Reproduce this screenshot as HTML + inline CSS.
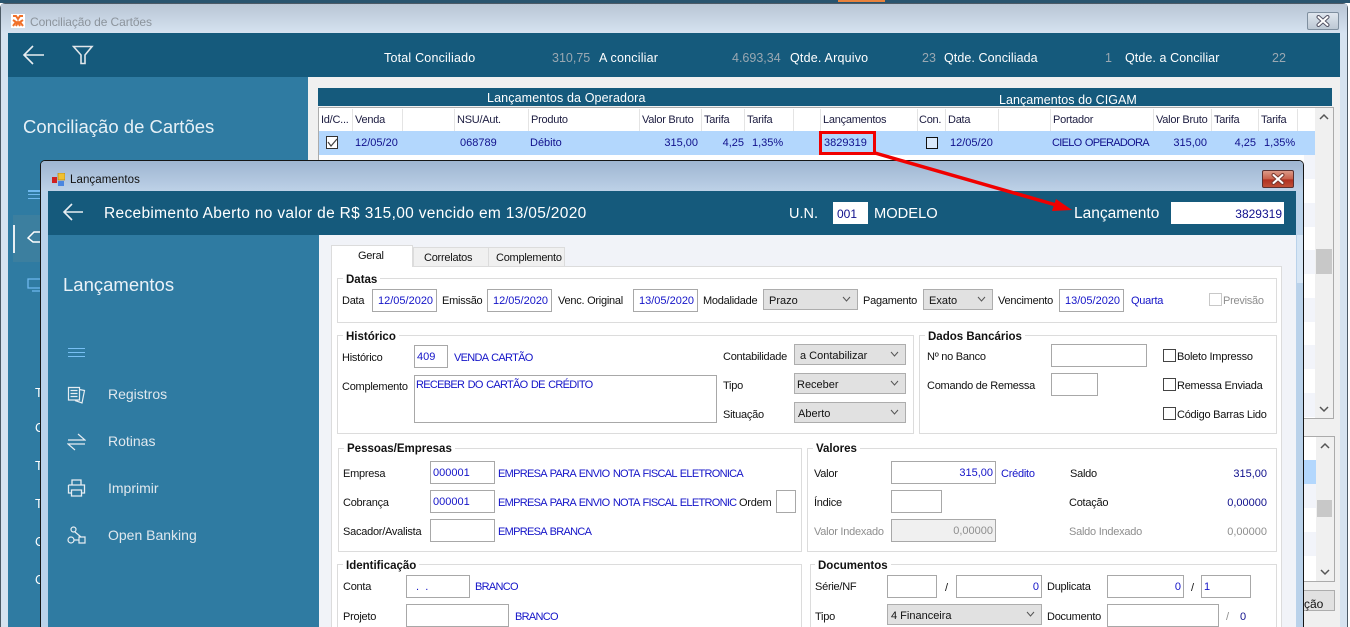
<!DOCTYPE html>
<html><head><meta charset="utf-8"><style>
html,body{margin:0;padding:0;width:1350px;height:627px;overflow:hidden;background:#fff}
body{position:relative;font-family:"Liberation Sans",sans-serif;font-size:11px;color:#111}
div,span{position:absolute;box-sizing:border-box}
.t{white-space:nowrap;line-height:14px;height:14px;margin-top:1px;letter-spacing:-.25px}
.z{margin-top:0;letter-spacing:.2px;font-size:12.5px;top:51px}
.q{letter-spacing:.08px}
.u{letter-spacing:-.7px;word-spacing:1px}
.b{color:#1414c8}
.n{color:#10108c}
.r{text-align:right}
.w{color:#fff}
.g{color:#8e8e8e}
.v{color:#9aa8b2;letter-spacing:0}
.i{background:#fff;border:1px solid #a8a8a8;height:23px;white-space:nowrap;line-height:23px;padding:0 2px;color:#1414c8}
.d{padding-left:5px}
.s{background:#e1e1e1;border:1px solid #adadad;height:21px;line-height:22px;padding-left:5px;white-space:nowrap}
.s svg{position:absolute;right:6px;top:6px}
.gb{border:1px solid #dcdcdc}
.gt{font-weight:bold;background:#fff;padding:0 3px;line-height:13px;height:13px;margin-top:1px;white-space:nowrap;font-size:11.5px}
.c{width:13px;height:13px;border:1px solid #444;background:#fff}
.h{color:#1c1c40}
.sep{width:1px;height:22px;top:109px;background:#e4e4e4}
.m{font-size:14px;color:#e0e8ee;line-height:18px;height:18px;white-space:nowrap}
.big{letter-spacing:0;font-size:14.5px;line-height:16px;height:16px}
</style></head><body>

<div style="left:0;top:0;width:1350px;height:3px;background:#29546e"></div>
<div style="left:838px;top:0;width:47px;height:2px;background:#e8823c"></div>
<div style="left:0;top:3px;width:1348px;height:624px;background:#d6e3f0;border:1px solid #4c5a66;border-bottom:0;border-radius:5px 5px 0 0"></div>
<div style="top:4px;left:1px;width:1346px;height:29px;background:linear-gradient(#b9c6d5,#d5e2f0)"></div>
<div style="left:11px;top:14px;width:14px;height:14px;background:#fff"></div>
<svg style="position:absolute;left:12px;top:15px" width="12" height="12"><rect width="12" height="12" fill="#fff"/><path d="M1 1h3l2 3 2-3h3M1 5l3 2-3 4M11 5l-3 2 3 4M4 11l2-4 2 4" stroke="#f0702a" stroke-width="2" fill="none"/></svg>
<div class="t" style="left:30px;top:15px;margin-top:0;letter-spacing:-.1px;font-size:12px;color:#8c949c">Conciliação de Cartões</div>
<div style="left:1307px;top:12px;width:32px;height:18px;border:1px solid #7f8f9f;border-radius:2px;background:linear-gradient(#dfe6ee,#bcc8d4)"></div>
<svg style="position:absolute;left:1316px;top:15px" width="14" height="12" fill="none" stroke-linecap="round"><path d="M2.500 2L11.500 10M11.500 2L2.500 10" stroke="#556" stroke-width="4"/><path d="M2.500 2L11.500 10M11.500 2L2.500 10" stroke="#fff" stroke-width="2"/></svg>

<div style="left:8px;top:33px;width:1332px;height:44px;background:#155a7c"></div>
<svg style="position:absolute;left:22px;top:45px" width="24" height="22" fill="none" stroke="#e8eef2" stroke-width="1.600"><path d="M2 10H22M11 1L2 10l9 9"/></svg>
<svg style="position:absolute;left:72px;top:45px" width="22" height="22" fill="none" stroke="#e0e6ea" stroke-width="1.600"><path d="M1.500 1.500H20L13 10V18.500H9V10Z"/></svg>
<div class="t z w" style="left:384px">Total Conciliado</div>
<div class="t z v" style="left:552px">310,75</div>
<div class="t z w" style="left:599px">A conciliar</div>
<div class="t z v" style="left:732px">4.693,34</div>
<div class="t z w" style="left:790px">Qtde. Arquivo</div>
<div class="t z v" style="left:922px">23</div>
<div class="t z w q" style="left:944px">Qtde. Conciliada</div>
<div class="t z v" style="left:1105px">1</div>
<div class="t z w q" style="left:1125px">Qtde. a Conciliar</div>
<div class="t z v" style="left:1272px">22</div>

<div style="left:8px;top:77px;width:300px;height:550px;background:#2f7ba2"></div>
<div style="left:308px;top:77px;width:1032px;height:550px;background:#f0f0f0"></div>
<div class="t" style="left:23px;top:116px;margin-top:0;letter-spacing:0;font-size:18.500px;line-height:22px;height:22px;color:#e6f0f6">Conciliação de Cartões</div>
<div style="left:28px;top:190px;width:12px;height:2px;background:#6eb8ee"></div>
<div style="left:28px;top:194px;width:12px;height:1px;background:#6eb8ee"></div>
<div style="left:28px;top:198px;width:12px;height:1px;background:#6eb8ee"></div>
<div style="left:13px;top:215px;width:27px;height:47px;background:#3c7f9f"></div>
<div style="left:13px;top:225px;width:2px;height:28px;background:#e8eef2"></div>
<svg style="position:absolute;left:27px;top:230px" width="14" height="16" fill="none" stroke="#fff" stroke-width="1.500"><path d="M1 8L7 2h7v10H6Z"/></svg>
<svg style="position:absolute;left:27px;top:277px" width="14" height="16" fill="none" stroke="#6eb8ee" stroke-width="1.300"><path d="M1 2H14V11H1ZM5 14H14"/></svg>
<div class="t w" style="left:35px;top:385px;font-size:12.500px">T</div>
<div class="t w" style="left:35px;top:420px;font-size:12.500px">C</div>
<div class="t w" style="left:35px;top:458px;font-size:12.500px">T</div>
<div class="t w" style="left:35px;top:496px;font-size:12.500px">T</div>
<div class="t w" style="left:35px;top:534px;font-size:12.500px">C</div>
<div class="t w" style="left:35px;top:572px;font-size:12.500px">C</div>

<div style="left:318px;top:88px;width:1014px;height:18px;background:#155a7c"></div>
<div class="t w" style="left:487px;top:90px;font-size:12.500px;letter-spacing:.12px">Lançamentos da Operadora</div>
<div class="t w" style="left:999px;top:92px;font-size:12.500px;letter-spacing:.05px">Lançamentos do CIGAM</div>
<div style="left:318px;top:107px;width:1016px;height:312px;background:#fff;border:1px solid #ababab"></div>
<div class="t h" style="left:321px;top:112px">Id/C...</div>
<div class="t h" style="left:355px;top:112px">Venda</div>
<div class="t h" style="left:457px;top:112px">NSU/Aut.</div>
<div class="t h" style="left:531px;top:112px">Produto</div>
<div class="t h" style="left:642px;top:112px">Valor Bruto</div>
<div class="t h" style="left:704px;top:112px">Tarifa</div>
<div class="t h" style="left:747px;top:112px">Tarifa</div>
<div class="t h" style="left:823px;top:112px">Lançamentos</div>
<div class="t h" style="left:919px;top:112px">Con.</div>
<div class="t h" style="left:948px;top:112px">Data</div>
<div class="t h" style="left:1053px;top:112px">Portador</div>
<div class="t h" style="left:1156px;top:112px">Valor Bruto</div>
<div class="t h" style="left:1214px;top:112px">Tarifa</div>
<div class="t h" style="left:1261px;top:112px">Tarifa</div>
<div class="sep" style="left:352px"></div><div class="sep" style="left:402px"></div><div class="sep" style="left:454px"></div><div class="sep" style="left:528px"></div><div class="sep" style="left:639px"></div><div class="sep" style="left:701px"></div><div class="sep" style="left:744px"></div><div class="sep" style="left:793px"></div><div class="sep" style="left:820px"></div><div class="sep" style="left:917px"></div><div class="sep" style="left:945px"></div><div class="sep" style="left:998px"></div><div class="sep" style="left:1050px"></div><div class="sep" style="left:1153px"></div><div class="sep" style="left:1211px"></div><div class="sep" style="left:1258px"></div><div class="sep" style="left:1297px"></div>
<div style="left:319px;top:131px;width:996px;height:24px;background:#b3d7fd"></div>
<svg style="position:absolute;left:326px;top:136px" width="12" height="13"><rect x=".5" y=".5" width="11" height="12" fill="#fff" stroke="#333"/><path d="M2 6l3 4 6-7" stroke="#444" stroke-width="1.200" fill="none"/></svg>
<div class="t n" style="left:355px;top:135px;letter-spacing:0">12/05/20</div>
<div class="t n" style="left:460px;top:135px;letter-spacing:0">068789</div>
<div class="t n" style="left:530px;top:135px;letter-spacing:0">Débito</div>
<div class="t n r" style="left:648px;top:135px;width:50px;letter-spacing:0">315,00</div>
<div class="t n r" style="left:714px;top:135px;width:30px;letter-spacing:0">4,25</div>
<div class="t n" style="left:752px;top:135px;letter-spacing:0">1,35%</div>
<div class="t n" style="left:824px;top:135px;letter-spacing:0">3829319</div>
<div style="left:926px;top:137px;width:12px;height:12px;border:1px solid #111;background:#d9e9fb"></div>
<div class="t n" style="left:950px;top:135px;letter-spacing:0">12/05/20</div>
<div class="t n u" style="left:1052px;top:135px">CIELO OPERADORA</div>
<div class="t n r" style="left:1157px;top:135px;width:50px;letter-spacing:0">315,00</div>
<div class="t n r" style="left:1226px;top:135px;width:30px;letter-spacing:0">4,25</div>
<div class="t n" style="left:1264px;top:135px;letter-spacing:0">1,35%</div>
<div style="left:1315px;top:108px;width:18px;height:310px;background:#f0f0f0"></div>
<div style="left:1316px;top:249px;width:16px;height:25px;background:#c8c8c8"></div>
<div style="left:1304px;top:155px;width:11px;height:24px;background:#f2f4fa"></div>
<div style="left:1304px;top:203px;width:11px;height:24px;background:#f2f4fa"></div>
<div style="left:1304px;top:250px;width:11px;height:24px;background:#f2f4fa"></div>
<div style="left:1304px;top:298px;width:11px;height:24px;background:#f2f4fa"></div>
<div style="left:1304px;top:345px;width:11px;height:24px;background:#f2f4fa"></div>
<div style="left:1304px;top:393px;width:11px;height:24px;background:#f2f4fa"></div>
<svg style="position:absolute;left:1319px;top:113px" width="10" height="8" fill="none" stroke="#555" stroke-width="1.500"><path d="M1 6L5 2l4 4"/></svg>
<svg style="position:absolute;left:1319px;top:405px" width="10" height="8" fill="none" stroke="#555" stroke-width="1.500"><path d="M1 2L5 6l4-4"/></svg>

<div style="left:1304px;top:436px;width:31px;height:146px;background:#fff;border:1px solid #ababab;border-left:0"></div>
<div style="left:1304px;top:460px;width:12px;height:24px;background:#b3d7fd"></div>
<div style="left:1304px;top:484px;width:12px;height:24px;background:#f2f4fa"></div>
<div style="left:1304px;top:532px;width:12px;height:24px;background:#f2f4fa"></div>
<div style="left:1316px;top:437px;width:18px;height:144px;background:#f0f0f0"></div>
<div style="left:1317px;top:500px;width:15px;height:17px;background:#c8c8c8"></div>
<svg style="position:absolute;left:1320px;top:442px" width="10" height="8" fill="none" stroke="#555" stroke-width="1.500"><path d="M1 6L5 2l4 4"/></svg>
<svg style="position:absolute;left:1320px;top:568px" width="10" height="8" fill="none" stroke="#555" stroke-width="1.500"><path d="M1 2L5 6l4-4"/></svg>
<div style="left:1290px;top:590px;width:45px;height:21px;background:#e1e1e1;border:1px solid #adadad"></div>
<div class="t" style="left:1304px;top:596px;font-size:12px;letter-spacing:0">ção</div>

<!-- modal -->
<div style="left:40px;top:160px;width:1264px;height:467px;background:#bad2ea;border:1px solid #151515;border-bottom:0;border-radius:5px 5px 0 0"></div>
<div style="left:41px;top:161px;width:1262px;height:30px;background:linear-gradient(#9eb5d1,#bdd1e7);border-radius:4px 4px 0 0"></div>
<svg style="position:absolute;left:52px;top:173px" width="13" height="14"><rect x="6" y="0" width="7" height="7" fill="#f0c030" stroke="#a87808" stroke-width=".6"/><rect x="0" y="4" width="5" height="6" fill="#d02020"/><rect x="6" y="8" width="6" height="5" fill="#4a86e0"/></svg>
<div class="t" style="left:70px;top:172px;font-size:11.500px;letter-spacing:.08px;color:#111">Lançamentos</div>
<div style="left:1262px;top:170px;width:32px;height:18px;border:1px solid #5a3030;border-radius:2px;background:linear-gradient(#dc9a88 0,#c8604a 50%,#b03020 55%,#c05038)"></div>
<svg style="position:absolute;left:1271px;top:173px" width="14" height="12" fill="none" stroke-linecap="round"><path d="M2.500 2L11.500 10M11.500 2L2.500 10" stroke="#7a3a30" stroke-width="4"/><path d="M2.500 2L11.500 10M11.500 2L2.500 10" stroke="#fff" stroke-width="2"/></svg>

<div style="left:48px;top:191px;width:1248px;height:44px;background:#155a7c"></div>
<svg style="position:absolute;left:62px;top:202px" width="22" height="22" fill="none" stroke="#e8eef2" stroke-width="1.600"><path d="M2 10H21M10 2L2 10l8 8"/></svg>
<div class="t w big" style="left:104px;top:205px;font-size:15.500px;letter-spacing:.32px">Recebimento Aberto no valor de R$ 315,00 vencido em 13/05/2020</div>
<div class="t w big" style="left:789px;top:205px">U.N.</div>
<div style="left:833px;top:202px;width:35px;height:22px;background:#fff;color:#10108c;line-height:24px;padding-left:4px;font-size:12px">001</div>
<div class="t w big" style="left:874px;top:205px;font-size:14.700px">MODELO</div>
<div class="t w big" style="left:1074px;top:205px;font-size:15.500px">Lançamento</div>
<div class="r" style="left:1171px;top:202px;width:113px;height:22px;background:#fff;color:#10108c;line-height:24px;padding-right:2px;font-size:12px">3829319</div>

<div style="left:48px;top:235px;width:271px;height:392px;background:#2f7ba2"></div>
<div style="left:319px;top:235px;width:977px;height:392px;background:#f1f3f8"></div>
<div style="left:1296px;top:235px;width:7px;height:392px;background:#bad2ea"></div>
<div style="left:1297px;top:235px;width:6px;height:48px;background:#d7e6f5"></div>
<div class="t" style="left:63px;top:274px;margin-top:0;letter-spacing:0;font-size:18.500px;line-height:22px;height:22px;color:#eaf2f8">Lançamentos</div>
<div style="left:68px;top:348px;width:17px;height:1px;background:#78c0f4"></div>
<div style="left:68px;top:352px;width:17px;height:1px;background:#78c0f4"></div>
<div style="left:68px;top:356px;width:17px;height:1px;background:#78c0f4"></div>
<svg style="position:absolute;left:67px;top:386px" width="19" height="18" fill="none" stroke="#e6edf2" stroke-width="1.200"><path d="M1.500 1.500H12.500V14H1.500ZM3.500 4.500H10.500M3.500 7.500H10.500M3.500 10.500H10.500M12.500 3.500L17.500 4.500 15 17 8 14.500"/></svg>
<div class="m" style="left:108px;top:385px">Registros</div>
<svg style="position:absolute;left:67px;top:432px" width="19" height="19" fill="none" stroke="#e6edf2" stroke-width="1.200"><path d="M1 8H18L11 2M18 12H1L8 18"/></svg>
<div class="m" style="left:108px;top:432px">Rotinas</div>
<svg style="position:absolute;left:67px;top:479px" width="19" height="18" fill="none" stroke="#e6edf2" stroke-width="1.300"><path d="M5 6V1H14V6M1.500 6H17.500V14H14.500M4.500 14H1.500V6M4.500 11H14.500V17H4.500Z"/></svg>
<div class="m" style="left:108px;top:479px">Imprimir</div>
<svg style="position:absolute;left:67px;top:526px" width="19" height="19" fill="none" stroke="#e6edf2" stroke-width="1.200"><circle cx="6.500" cy="3.500" r="2.500"/><circle cx="4" cy="14" r="3"/><path d="M8 6L14 11M7 14H12M12 11H18V17H12Z"/></svg>
<div class="m" style="left:108px;top:526px">Open Banking</div>

<!-- panel -->
<div style="left:331px;top:266px;width:951px;height:361px;background:#fff;border:1px solid #dcdcdc;border-bottom:0"></div>
<div style="left:331px;top:245px;width:82px;height:22px;background:#fff;border:1px solid #dcdcdc;border-bottom:0"></div>
<div style="left:413px;top:247px;width:76px;height:19px;background:#f0f0f0;border:1px solid #dcdcdc;border-bottom:0"></div>
<div style="left:488px;top:247px;width:77px;height:19px;background:#f0f0f0;border:1px solid #dcdcdc;border-bottom:0"></div>
<div class="t" style="left:358px;top:248px">Geral</div>
<div class="t" style="left:424px;top:250px">Correlatos</div>
<div class="t" style="left:496px;top:250px">Complemento</div>

<div class="gb" style="left:337px;top:278px;width:940px;height:45px"></div>
<div class="gt" style="left:343px;top:273px">Datas</div>
<div class="t" style="left:342px;top:293px">Data</div>
<div class="i d" style="left:372px;top:289px;width:65px">12/05/2020</div>
<div class="t" style="left:442px;top:293px">Emissão</div>
<div class="i d" style="left:487px;top:289px;width:65px">12/05/2020</div>
<div class="t" style="left:558px;top:293px">Venc. Original</div>
<div class="i d" style="left:633px;top:289px;width:65px">13/05/2020</div>
<div class="t" style="left:703px;top:293px">Modalidade</div>
<div class="s" style="left:763px;top:289px;width:95px">Prazo<svg width="9" height="6" fill="none" stroke="#555"><path d="M1 1l3.500 4L8 1"/></svg></div>
<div class="t" style="left:863px;top:293px">Pagamento</div>
<div class="s" style="left:923px;top:289px;width:70px">Exato<svg width="9" height="6" fill="none" stroke="#555"><path d="M1 1l3.500 4L8 1"/></svg></div>
<div class="t" style="left:998px;top:293px">Vencimento</div>
<div class="i d" style="left:1059px;top:289px;width:65px">13/05/2020</div>
<div class="t b" style="left:1131px;top:293px">Quarta</div>
<div style="left:1209px;top:293px;width:13px;height:13px;border:1px solid #c8c8c8"></div>
<div class="t g" style="left:1223px;top:293px">Previsão</div>

<div class="gb" style="left:337px;top:335px;width:577px;height:99px"></div>
<div class="gt" style="left:343px;top:330px">Histórico</div>
<div class="t" style="left:342px;top:350px">Histórico</div>
<div class="i" style="left:414px;top:345px;width:34px">409</div>
<div class="t b u" style="left:454px;top:350px">VENDA CARTÃO</div>
<div class="t" style="left:342px;top:379px">Complemento</div>
<div class="i" style="left:414px;top:375px;width:303px;height:48px;line-height:19px;padding-left:1px;letter-spacing:-.7px;word-spacing:1px">RECEBER DO CARTÃO DE CRÉDITO</div>
<div class="t" style="left:723px;top:349px">Contabilidade</div>
<div class="s" style="left:794px;top:344px;width:112px">a Contabilizar<svg width="9" height="6" fill="none" stroke="#555"><path d="M1 1l3.500 4L8 1"/></svg></div>
<div class="t" style="left:723px;top:378px">Tipo</div>
<div class="s" style="left:794px;top:373px;width:112px;padding-left:2px">Receber<svg width="9" height="6" fill="none" stroke="#555"><path d="M1 1l3.500 4L8 1"/></svg></div>
<div class="t" style="left:723px;top:407px">Situação</div>
<div class="s" style="left:794px;top:402px;width:112px;padding-left:3px">Aberto<svg width="9" height="6" fill="none" stroke="#555"><path d="M1 1l3.500 4L8 1"/></svg></div>

<div class="gb" style="left:919px;top:335px;width:358px;height:99px"></div>
<div class="gt" style="left:925px;top:330px">Dados Bancários</div>
<div class="t" style="left:927px;top:349px">Nº no Banco</div>
<div class="i" style="left:1051px;top:344px;width:96px">&nbsp;</div>
<div class="t" style="left:927px;top:378px">Comando de Remessa</div>
<div class="i" style="left:1051px;top:373px;width:47px">&nbsp;</div>
<div class="c" style="left:1163px;top:349px"></div>
<div class="t" style="left:1177px;top:349px">Boleto Impresso</div>
<div class="c" style="left:1163px;top:378px"></div>
<div class="t" style="left:1177px;top:378px">Remessa Enviada</div>
<div class="c" style="left:1163px;top:407px"></div>
<div class="t" style="left:1177px;top:407px">Código Barras Lido</div>

<div class="gb" style="left:338px;top:448px;width:464px;height:104px"></div>
<div class="gt" style="left:344px;top:442px">Pessoas/Empresas</div>
<div class="t" style="left:343px;top:466px">Empresa</div>
<div class="i" style="left:430px;top:461px;width:65px">000001</div>
<div class="t b u" style="left:498px;top:466px">EMPRESA PARA ENVIO NOTA FISCAL ELETRONICA</div>
<div class="t" style="left:343px;top:495px">Cobrança</div>
<div class="i" style="left:430px;top:490px;width:65px">000001</div>
<div class="t b u" style="left:498px;top:495px">EMPRESA PARA ENVIO NOTA FISCAL ELETRONIC</div>
<div class="t" style="left:739px;top:495px">Ordem</div>
<div class="i" style="left:776px;top:490px;width:20px">&nbsp;</div>
<div class="t" style="left:343px;top:524px">Sacador/Avalista</div>
<div class="i" style="left:430px;top:519px;width:65px">&nbsp;</div>
<div class="t b u" style="left:498px;top:524px">EMPRESA BRANCA</div>

<div class="gb" style="left:807px;top:448px;width:470px;height:104px"></div>
<div class="gt" style="left:813px;top:442px">Valores</div>
<div class="t" style="left:814px;top:466px">Valor</div>
<div class="i r" style="left:891px;top:461px;width:105px">315,00</div>
<div class="t b" style="left:1001px;top:466px">Crédito</div>
<div class="t" style="left:1070px;top:466px">Saldo</div>
<div class="t n r" style="left:1200px;top:466px;width:67px;letter-spacing:0">315,00</div>
<div class="t" style="left:814px;top:495px">Índice</div>
<div class="i" style="left:891px;top:490px;width:51px">&nbsp;</div>
<div class="t" style="left:1069px;top:495px">Cotação</div>
<div class="t n r" style="left:1200px;top:495px;width:67px;letter-spacing:0">0,00000</div>
<div class="t g" style="left:814px;top:524px">Valor Indexado</div>
<div class="i r" style="left:891px;top:519px;width:105px;background:#f0f0f0;color:#8e8e8e">0,00000</div>
<div class="t g" style="left:1069px;top:524px">Saldo Indexado</div>
<div class="t g r" style="left:1200px;top:524px;width:67px;letter-spacing:0">0,00000</div>

<div class="gb" style="left:337px;top:564px;width:465px;height:70px"></div>
<div class="gt" style="left:343px;top:559px">Identificação</div>
<div class="t" style="left:343px;top:579px">Conta</div>
<div class="i" style="left:406px;top:575px;width:64px;padding-left:6px">&nbsp;. &nbsp;.</div>
<div class="t b u" style="left:475px;top:579px">BRANCO</div>
<div class="t" style="left:343px;top:609px">Projeto</div>
<div class="i" style="left:406px;top:604px;width:103px">&nbsp;</div>
<div class="t b u" style="left:515px;top:609px">BRANCO</div>

<div class="gb" style="left:810px;top:564px;width:467px;height:70px"></div>
<div class="gt" style="left:815px;top:559px">Documentos</div>
<div class="t" style="left:815px;top:579px">Série/NF</div>
<div class="i" style="left:887px;top:575px;width:50px">&nbsp;</div>
<div class="t" style="left:945px;top:580px">/</div>
<div class="i r" style="left:956px;top:575px;width:86px">0</div>
<div class="t" style="left:1047px;top:579px">Duplicata</div>
<div class="i r" style="left:1107px;top:575px;width:77px">0</div>
<div class="t" style="left:1191px;top:580px">/</div>
<div class="i" style="left:1201px;top:575px;width:50px">1</div>
<div class="t" style="left:815px;top:609px">Tipo</div>
<div class="s" style="left:887px;top:604px;width:155px;padding-left:3px">4 Financeira<svg width="9" height="6" fill="none" stroke="#555"><path d="M1 1l3.500 4L8 1"/></svg></div>
<div class="t" style="left:1047px;top:609px">Documento</div>
<div class="i" style="left:1107px;top:604px;width:112px">&nbsp;</div>
<div class="t g" style="left:1226px;top:609px">/</div>
<div class="t n" style="left:1240px;top:609px">0</div>

<!-- annotation -->
<div style="left:819px;top:131px;width:57px;height:24px;border:3px solid #f00000"></div>
<svg style="position:absolute;left:0;top:0" width="1350" height="627"><path d="M875 153L1056 205" stroke="#f00000" stroke-width="3.500" fill="none"/><path d="M1072 210L1052 211 1056 199Z" fill="#f00000"/></svg>
</body></html>
